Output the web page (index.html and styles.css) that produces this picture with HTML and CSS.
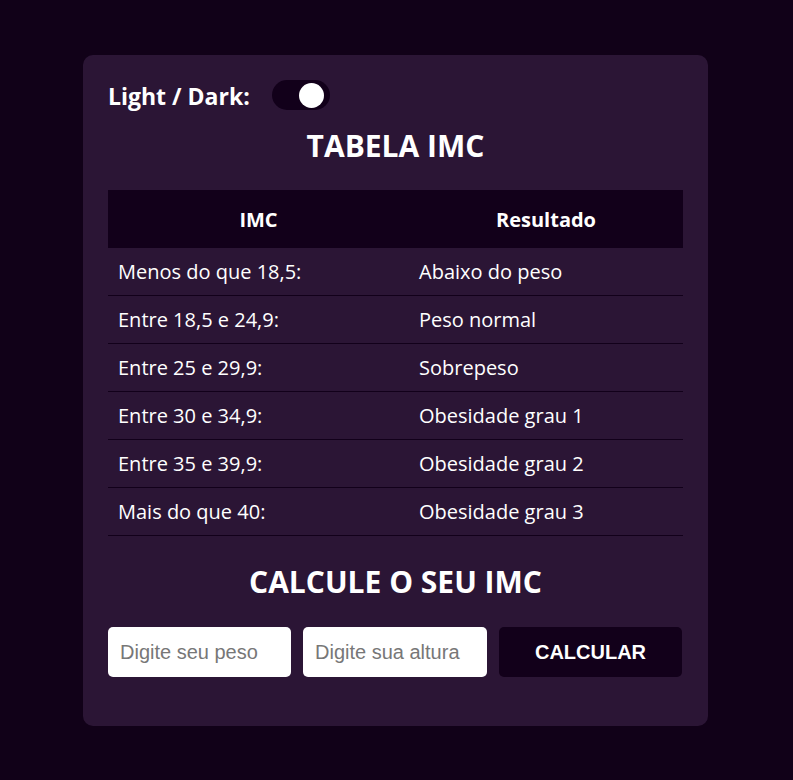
FILE: index.html
```html
<!DOCTYPE html>
<html lang="pt-BR">
<head>
<meta charset="utf-8">
<title>Tabela IMC</title>
<link rel="stylesheet" href="styles.css">
</head>
<body>
<main class="card">
  <div class="theme-row">
    <span class="theme-label">Light / Dark:</span>
    <span class="toggle"><span class="knob"></span></span>
  </div>
  <h1 class="title">TABELA IMC</h1>
  <table class="imc-table">
    <thead>
      <tr><th class="col1">IMC</th><th>Resultado</th></tr>
    </thead>
    <tbody>
      <tr><td>Menos do que 18,5:</td><td>Abaixo do peso</td></tr>
      <tr><td>Entre 18,5 e 24,9:</td><td>Peso normal</td></tr>
      <tr><td>Entre 25 e 29,9:</td><td>Sobrepeso</td></tr>
      <tr><td>Entre 30 e 34,9:</td><td>Obesidade grau 1</td></tr>
      <tr><td>Entre 35 e 39,9:</td><td>Obesidade grau 2</td></tr>
      <tr><td>Mais do que 40:</td><td>Obesidade grau 3</td></tr>
    </tbody>
  </table>
  <h2 class="title calc-title">CALCULE O SEU IMC</h2>
  <form class="calc-form">
    <input class="field" type="text" placeholder="Digite seu peso">
    <input class="field field-wide" type="text" placeholder="Digite sua altura">
    <button class="btn" type="button">CALCULAR</button>
  </form>
</main>
</body>
</html>
```
FILE: styles.css
```css
* { box-sizing: border-box; }
html, body { margin: 0; padding: 0; }
body {
  background: #110118;
  font-family: "Open Sans", sans-serif;
  color: #ffffff;
  padding-top: 55px;
  min-height: 780px;
}
.card {
  width: 625px;
  margin: 0 0 0 83px;
  background: #2b1535;
  border-radius: 10px;
  padding: 25px 25px 49px 25px;
}
.theme-row {
  display: flex;
  align-items: center;
  height: 30px;
  gap: 22px;
}
.theme-label {
  font-size: 23px;
  font-weight: 700;
  line-height: 30px;
  position: relative;
  top: 1px;
}
.toggle {
  width: 58px;
  height: 30px;
  background: #12001a;
  border-radius: 15px;
  display: flex;
  align-items: center;
  justify-content: flex-end;
  padding-right: 6px;
}
.knob {
  width: 25px;
  height: 25px;
  border-radius: 50%;
  background: #ffffff;
}
.title {
  margin: 17px 0 25px 0;
  font-size: 30px;
  font-weight: 700;
  line-height: 38px;
  text-align: center;
}
.imc-table {
  width: 100%;
  border-collapse: separate;
  border-spacing: 0;
  font-size: 20px;
}
.imc-table th {
  background: #12001a;
  height: 58px;
  font-weight: 700;
  text-align: center;
  padding: 0;
}
.imc-table th.col1 { width: 301px; }
.imc-table td {
  height: 48px;
  padding: 0 10px;
  border-bottom: 1px solid #12001a;
}
.calc-title { margin: 27px 0 26px 0; }
.calc-form {
  display: flex;
  gap: 12px;
}
.field {
  width: 183px;
  height: 50px;
  border: none;
  border-radius: 5px;
  padding: 0 12px;
  font-family: "Liberation Sans", Arial, sans-serif;
  font-size: 20px;
  color: #222;
  background: #ffffff;
}
.field-wide { width: 184px; }
.field::placeholder { color: #777777; }
.btn {
  width: 183px;
  height: 50px;
  border: none;
  border-radius: 5px;
  background: #12001a;
  color: #ffffff;
  font-family: "Liberation Sans", Arial, sans-serif;
  font-size: 20px;
  font-weight: 700;
}
```
